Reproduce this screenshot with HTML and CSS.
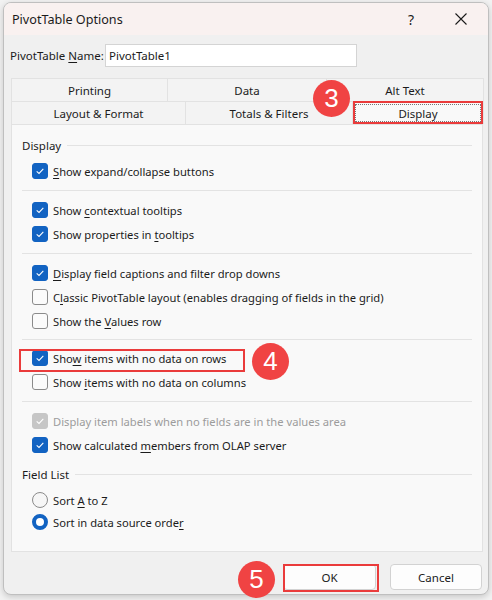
FILE: index.html
```html
<!DOCTYPE html>
<html>
<head>
<meta charset="utf-8">
<link rel="stylesheet" href="styles.css">
</head>
<body>
<div class="dialog">
  <div class="titlebar">
    <span class="title">PivotTable Options</span>
    <span class="help">?</span>
    <span class="close"><svg width="14" height="14" viewBox="0 0 14 14"><path d="M1.5 1.5 L12.5 12.5 M12.5 1.5 L1.5 12.5" stroke="#1b1b1b" stroke-width="1.1" fill="none"/></svg></span>
  </div>
  <div class="namerow">
    <span class="namelabel">PivotTable <u>N</u>ame:</span>
    <div class="nameinput">PivotTable1</div>
  </div>
  <div class="tabs">
    <div class="tabrow tabrow1">
      <div class="tab">Printing</div>
      <div class="tab">Data</div>
      <div class="tab">Alt Text</div>
    </div>
    <div class="tabrow tabrow2">
      <div class="tab">Layout &amp; Format</div>
      <div class="tab">Totals &amp; Filters</div>
      <div class="tab tab-active"><span class="focusrect">Display</span></div>
    </div>
  </div>
  <div class="panel">
    <div class="group-head"><span>Display</span><span class="group-line"></span></div>
    <div class="row"><span class="cb on"><svg viewBox="0 0 16 16"><path d="M4.2 8.3 L6.9 10.8 L11.8 5.6" /></svg></span><span class="lbl"><u>S</u>how expand/collapse buttons</span></div>
    <div class="sep"></div>
    <div class="row"><span class="cb on"><svg viewBox="0 0 16 16"><path d="M4.2 8.3 L6.9 10.8 L11.8 5.6" /></svg></span><span class="lbl">Show <u>c</u>ontextual tooltips</span></div>
    <div class="row"><span class="cb on"><svg viewBox="0 0 16 16"><path d="M4.2 8.3 L6.9 10.8 L11.8 5.6" /></svg></span><span class="lbl">Show properties in <u>t</u>ooltips</span></div>
    <div class="sep"></div>
    <div class="row"><span class="cb on"><svg viewBox="0 0 16 16"><path d="M4.2 8.3 L6.9 10.8 L11.8 5.6" /></svg></span><span class="lbl"><u>D</u>isplay field captions and filter drop downs</span></div>
    <div class="row"><span class="cb"></span><span class="lbl">C<u>l</u>assic PivotTable layout (enables dragging of fields in the grid)</span></div>
    <div class="row"><span class="cb"></span><span class="lbl">Show the <u>V</u>alues row</span></div>
    <div class="sep sep-short"></div>
    <div class="row"><span class="cb on"><svg viewBox="0 0 16 16"><path d="M4.2 8.3 L6.9 10.8 L11.8 5.6" /></svg></span><span class="lbl">Sho<u>w</u> items with no data on rows</span></div>
    <div class="row"><span class="cb"></span><span class="lbl">Show <u>i</u>tems with no data on columns</span></div>
    <div class="sep"></div>
    <div class="row disabled"><span class="cb dis"><svg viewBox="0 0 16 16"><path d="M4.2 8.3 L6.9 10.8 L11.8 5.6" /></svg></span><span class="lbl">Display item labels when no fields are in the values area</span></div>
    <div class="row"><span class="cb on"><svg viewBox="0 0 16 16"><path d="M4.2 8.3 L6.9 10.8 L11.8 5.6" /></svg></span><span class="lbl">Show calculated <u>m</u>embers from OLAP server</span></div>
    <div class="group-head group-head2"><span>Field List</span><span class="group-line"></span></div>
    <div class="rrow rrow1"><span class="rb"></span><span class="lbl">Sort <u>A</u> to Z</span></div>
    <div class="rrow"><span class="rb on"></span><span class="lbl">Sort in data source orde<u>r</u></span></div>
  </div>
  <div class="footer">
    <div class="btn btn-ok">OK</div>
    <div class="btn btn-cancel">Cancel</div>
  </div>
</div>

<div class="callout c3">3</div>
<div class="callout c4">4</div>
<div class="callout c5">5</div>
<div class="redbox rb-tab"></div>
<div class="redbox rb-row"></div>
<div class="redbox rb-ok"></div>
</body>
</html>
```

FILE: styles.css
```css
html, body {
  margin: 0;
  padding: 0;
}
body {
  width: 492px;
  height: 600px;
  background: #f2f2f2;
  font-family: "Noto Sans", "Open Sans", sans-serif;
  font-size: 11.2px;
  color: #1b1b1b;
  position: relative;
  overflow: hidden;
}
u {
  text-decoration: underline;
  text-underline-offset: 2px;
  text-decoration-thickness: 1px;
}
.dialog {
  box-sizing: border-box;
  margin: 2px 0 0 3px;
  width: 486px;
  height: 593px;
  border: 1px solid #bfbfbf;
  border-radius: 8px;
  background: #f0f0f0;
  overflow: hidden;
  box-shadow: 0 2px 6px rgba(0,0,0,0.18);
}
.titlebar {
  height: 32px;
  background: #f9f1f0;
  display: flex;
  align-items: center;
  padding-left: 8px;
}
.title {
  font-size: 12.6px;
  flex: 1;
}
.help {
  font-size: 14px;
  width: 14px;
  text-align: center;
  margin-right: 36px;
}
.close {
  display: flex;
  width: 14px;
  height: 14px;
  margin-right: 20px;
}
.namerow {
  display: flex;
  align-items: center;
  margin-top: 9px;
  padding-left: 6px;
  height: 23px;
  font-size: 11.5px;
}
.namelabel {
  width: 95px;
}
.nameinput {
  box-sizing: border-box;
  width: 252px;
  height: 23px;
  border: 1px solid #d4d4d4;
  background: #ffffff;
  padding: 2px 3px;
  line-height: 17px;
}
.tabs {
  margin: 11px 5px 0 7px;
}
.tabrow {
  display: grid;
  height: 23px;
}
.tabrow1 {
  grid-template-columns: 156px 159px 157px;
}
.tabrow2 {
  grid-template-columns: 174px 167px 131px;
}
.tab {
  box-sizing: border-box;
  border: 1px solid #e2e2e2;
  border-bottom: none;
  margin-right: -1px;
  background: #f3f3f3;
  display: flex;
  align-items: center;
  justify-content: center;
  font-size: 11.5px;
}
.tab-active {
  background: #f9f9f9;
  padding: 2px;
}
.focusrect {
  flex: 1;
  align-self: stretch;
  display: flex;
  align-items: center;
  justify-content: center;
  border: 1px dotted #777;
}
.panel {
  box-sizing: border-box;
  height: 428px;
  margin: 0 5px 0 7px;
  border: 1px solid #e2e2e2;
  background: #f9f9f9;
  padding: 8px 10px 0 10px;
}
.group-head {
  display: flex;
  align-items: center;
  height: 24px;
  margin-bottom: 2px;
  font-size: 11.5px;
}
.group-head2 {
  margin-top: 5px;
  margin-bottom: 3px;
}
.group-line {
  flex: 1;
  height: 1px;
  background: #e3e3e3;
  margin-left: 6px;
}
.row, .rrow {
  display: flex;
  align-items: center;
  height: 24px;
  padding-left: 10px;
}
.rrow {
  height: 22px;
}
.lbl {
  margin-left: 5px;
  white-space: nowrap;
}
.sep {
  height: 15px;
  display: flex;
  align-items: center;
}
.sep::before {
  content: "";
  flex: 1;
  height: 1px;
  background: #e3e3e3;
}
.sep-short {
  height: 13px;
}
.cb {
  box-sizing: border-box;
  width: 16px;
  height: 16px;
  border-radius: 3px;
  border: 1px solid #8b8b8b;
  background: #fbfbfb;
  display: flex;
}
.cb.on {
  background: #1263c2;
  border-color: #1263c2;
}
.cb.dis {
  background: #c6c6c6;
  border-color: #c6c6c6;
}
.cb svg {
  width: 14px;
  height: 14px;
}
.cb svg path {
  fill: none;
  stroke: #ffffff;
  stroke-width: 1.2;
}
.disabled .lbl {
  color: #9c9c9c;
}
.rb {
  box-sizing: border-box;
  width: 16px;
  height: 16px;
  border-radius: 50%;
  border: 1px solid #8b8b8b;
  background: #f6f6f6;
}
.rb.on {
  border: 4.5px solid #1263c2;
  background: #ffffff;
}
.footer {
  display: flex;
  justify-content: flex-end;
  gap: 14px;
  margin-top: 12px;
  padding-right: 6px;
}
.btn {
  box-sizing: border-box;
  height: 26px;
  border: 1px solid #d2d2d2;
  border-radius: 4px;
  background: #fdfdfd;
  display: flex;
  align-items: center;
  justify-content: center;
  font-size: 11.5px;
}
.btn-ok {
  width: 93px;
}
.btn-cancel {
  width: 92px;
}
.callout {
  position: absolute;
  width: 37px;
  height: 37px;
  border-radius: 50%;
  background: #f04343;
  color: #ffffff;
  font-family: "Liberation Sans", "Noto Sans", sans-serif;
  font-size: 26px;
  line-height: 37px;
  text-align: center;
}
.c3 { left: 313px; top: 80px; }
.c4 { left: 252px; top: 343px; }
.c5 { left: 238px; top: 561px; }
.redbox {
  position: absolute;
  box-sizing: border-box;
  border: 2px solid #ea3b3b;
}
.rb-tab { left: 353px; top: 101px; width: 130px; height: 23px; }
.rb-row { left: 19px; top: 349px; width: 226px; height: 23px; }
.rb-ok { left: 283px; top: 564px; width: 96px; height: 28px; }
```
